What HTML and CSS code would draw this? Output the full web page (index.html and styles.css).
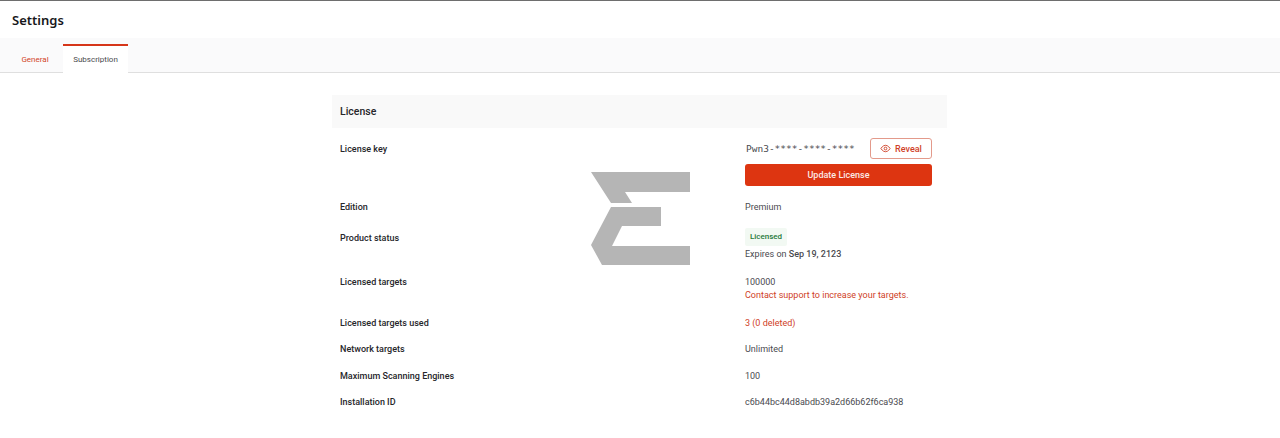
FILE: index.html
```html
<!DOCTYPE html>
<html lang="en">
<head>
<meta charset="utf-8">
<title>Settings</title>
<link rel="stylesheet" href="styles.css">
</head>
<body>
<div class="page">
  <header class="header"><h1 class="title">Settings</h1></header>
  <nav class="tabs">
    <a class="tab tab-link">General</a>
    <a class="tab tab-active">Subscription</a>
  </nav>
  <main class="content">
    <section class="license">
      <h2 class="section-head">License</h2>
      <div class="rows">
        <div class="row row-key">
          <div class="label label-key">License key</div>
          <div class="value">
            <div class="key-line">
              <span class="key">Pwn3-****-****-****</span>
              <button class="btn-outline">
                <svg class="eye" viewBox="0 0 24 24" width="11" height="11" fill="none" stroke="currentColor" stroke-width="2"><path d="M2 12s4-7 10-7 10 7 10 7-4 7-10 7-10-7-10-7z"/><circle cx="12" cy="12" r="3"/></svg>
                Reveal
              </button>
            </div>
            <button class="btn-solid">Update License</button>
          </div>
        </div>
        <div class="row">
          <div class="label">Edition</div>
          <div class="value">Premium</div>
        </div>
        <div class="row">
          <div class="label label-status">Product status</div>
          <div class="value">
            <span class="badge">Licensed</span>
            <div class="expires">Expires on <strong>Sep 19, 2123</strong></div>
          </div>
        </div>
        <div class="row">
          <div class="label">Licensed targets</div>
          <div class="value">
            <div>100000</div>
            <div class="accent contact">Contact support to increase your targets.</div>
          </div>
        </div>
        <div class="row">
          <div class="label">Licensed targets used</div>
          <div class="value accent">3 (0 deleted)</div>
        </div>
        <div class="row">
          <div class="label">Network targets</div>
          <div class="value">Unlimited</div>
        </div>
        <div class="row">
          <div class="label">Maximum Scanning Engines</div>
          <div class="value">100</div>
        </div>
        <div class="row">
          <div class="label">Installation ID</div>
          <div class="value">c6b44bc44d8abdb39a2d66b62f6ca938</div>
        </div>
      </div>
    </section>
  </main>
  <svg class="watermark" viewBox="0 0 99 93" width="99" height="93">
    <path fill="#b5b5b5" d="M0 0H99V20H34L41 31H20Z"/>
    <path fill="#b5b5b5" d="M20 35H70V54H31L21 74H99V93H11L0 73Z"/>
  </svg>
</div>
</body>
</html>
```
FILE: styles.css
```css
* { box-sizing: border-box; }
html, body { margin: 0; height: 100%; }
body {
  background: #fff;
  font-family: Roboto, "Noto Sans", sans-serif;
  font-size: 9px;
  line-height: 13.5px;
  color: #4a4a4f;
  overflow: hidden;
}
.page {
  position: relative;
  height: 438px;
  border-top: 1px solid #6e6e6e;
}
.header { height: 37px; padding: 0 12px; display: flex; align-items: center; }
.title { margin: 0; font-size: 13px; line-height: 18px; font-weight: 600; color: #17171a; font-family: "Noto Sans", sans-serif; }
.tabs {
  height: 35px;
  display: flex;
  background: #fafafb;
  border-bottom: 1px solid #dfdfdf;
  padding-left: 7px;
  font-size: 8px;
}
.tab { display: flex; align-items: center; justify-content: center; padding-top: 9px; }
.tab-link { width: 56px; color: #d2452a; }
.tab-active {
  width: 65px;
  margin: 6px 0 -1px;
  padding-top: 1px;
  background: #fff;
  border-top: 2px solid #d6361a;
  color: #4a4a4f;
}
.content { display: flex; justify-content: center; padding: 22px 333px 0 332px; }
.license { width: 615px; }
.section-head {
  margin: 0 0 3.5px;
  height: 33px;
  padding: 0 8px;
  display: flex;
  align-items: center;
  background: #f9f9f9;
  font-size: 10.5px;
  font-weight: 500;
  color: #26262a;
}
.row { display: flex; padding: 7.5px 15px 5.5px 8px; }
.row-key { padding-top: 6.5px; padding-bottom: 6.5px; }
.label { width: 405px; flex: none; font-weight: 500; color: #26262a; }
.label-key { padding-top: 4.5px; }
.label-status { padding-top: 4.25px; }
.value { flex: 1; min-width: 0; }
.key-line { display: flex; align-items: center; justify-content: space-between; margin-bottom: 5px; }
.key { font-family: "DejaVu Sans Mono", monospace; font-size: 9.5px; padding-left: 1px; }
.btn-outline {
  width: 62px;
  height: 21px;
  padding: 0;
  display: flex;
  align-items: center;
  justify-content: center;
  gap: 4px;
  background: #fff;
  border: 1px solid #e39a8b;
  border-radius: 3px;
  font: 500 9px Roboto, sans-serif;
  color: #cf4127;
}
.btn-solid {
  display: block;
  width: 100%;
  height: 22px;
  margin-bottom: 1px;
  padding: 0;
  background: #dd3511;
  border: 0;
  border-radius: 3px;
  font: 500 9px Roboto, sans-serif;
  color: #fbeae6;
}
.badge {
  display: block;
  width: 42px;
  height: 18px;
  margin: 0 0 2px;
  background: #f2f9f3;
  border-radius: 2px;
  font-size: 8px;
  font-weight: 500;
  line-height: 18px;
  text-align: center;
  color: #1f7a3a;
}
.expires { margin-bottom: 1.5px; }
.contact { margin-bottom: 1px; }
strong { font-weight: 500; }
.accent { color: #cf4127; }
.watermark { position: absolute; left: 591px; top: 171px; }
```
